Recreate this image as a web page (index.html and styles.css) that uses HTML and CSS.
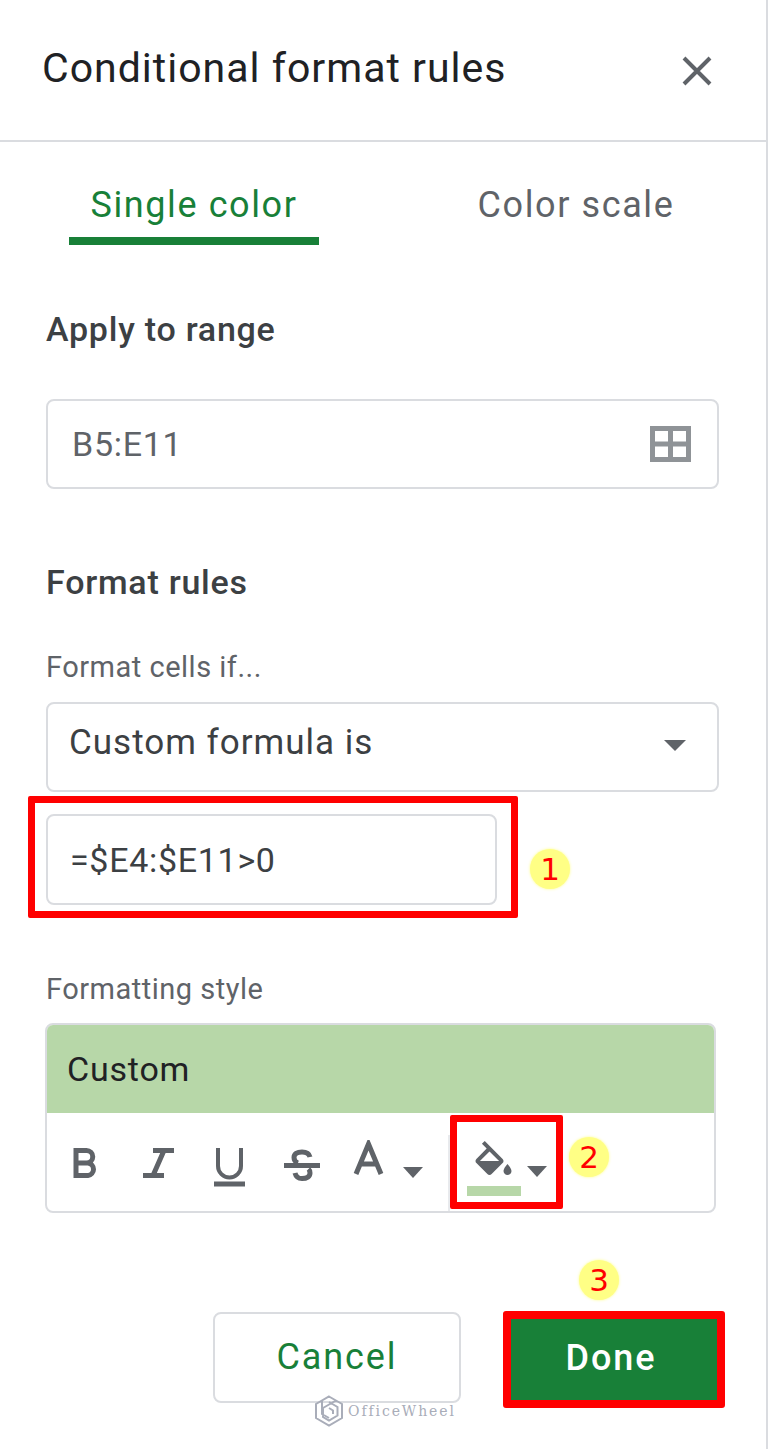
FILE: index.html
```html
<!DOCTYPE html>
<html>
	<head>
		<meta charset="UTF-8">
		<title>Conditional format rules</title>
		<link rel="stylesheet" href="styles.css">
	</head>
	<body>
		<section id="panel">
			<header class="head">
				<h1>Conditional format rules</h1>
				<svg class="close" width="30" height="30" viewBox="0 0 30 30"><path d="M2 2L28 28M28 2L2 28"/></svg>
			</header>

			<nav class="tabs">
				<div class="tab on">Single color</div>
				<div class="tab">Color scale</div>
			</nav>

			<section class="body">
				<h2 class="title range-title">Apply to range</h2>
				<div class="field range">
					<span>B5:E11</span>
					<svg width="41" height="36" viewBox="0 0 41 36"><path class="grid" d="M2.5 2.5H38.5V33.5H2.5ZM20.5 2.5V33.5M2.5 18H38.5"/></svg>
				</div>

				<h2 class="title rules-title">Format rules</h2>
				<div class="label if-label">Format cells if...</div>
				<div class="field select">
					<span>Custom formula is</span>
					<i class="caret"></i>
				</div>

				<div class="mark formula">
					<div class="field formula-input">=$E4:$E11&gt;0</div>
				</div>
				<b class="badge b1">1</b>

				<div class="label style-label">Formatting style</div>
				<div class="card">
					<div class="preview">Custom</div>
					<div class="tools">
						<div class="tool">
							<svg width="40" height="48" viewBox="0 0 40 48"><path class="ico" d="M10 8V38M8 10.5H20.5a6.2 6.2 0 0 1 0 12.5H10M20.5 23H22a6.3 6.3 0 0 1 0 12.5H8"/></svg>
						</div>
						<div class="tool">
							<svg width="40" height="48" viewBox="0 0 40 48"><path class="ico" d="M15 10.5H36M5 35.5H26M26 10.5L15 35.5"/></svg>
						</div>
						<div class="tool">
							<svg width="40" height="48" viewBox="0 0 40 48"><path class="ico thin" d="M8 8V26a11.5 11.5 0 0 0 23 0V8"/><path class="ico" d="M4 44H35"/></svg>
						</div>
						<div class="tool">
							<svg width="40" height="48" viewBox="0 0 40 48"><path class="ico" d="M28 17C27 13 24 12 20 12C15 12 12 14 12 17.500C12 20 13 22 16 23M13 33C14 37 17 38.500 20 38.500C25 38.500 28 36.500 28 33C28 31.500 27.500 30 26.500 29"/><path class="ico" d="M2 25.500H38"/></svg>
						</div>
						<div class="tool color">
							<svg width="32" height="48" viewBox="0 0 32 48"><path class="ico" d="M3 34L15.500 4L28 34M8 24H23"/></svg>
							<i class="caret small"></i>
						</div>
						<div class="mark fill">
							<div class="fill-row">
								<svg width="37" height="34" viewBox="3 0 18 17"><path class="solid" d="M16.560 8.940L7.620 0 6.210 1.410l2.380 2.380-5.150 5.150c-.59.59-.59 1.540 0 2.120l5.500 5.500c.29.29.68.44 1.060.44s.77-.15 1.060-.44l5.500-5.500c.59-.58.59-1.530 0-2.120zM5.210 10L10 5.210 14.790 10H5.210zM19 11.500s-2 2.170-2 3.500c0 1.100.9 2 2 2s2-.9 2-2c0-1.330-2-3.500-2-3.500z"/></svg>
								<i class="caret small"></i>
							</div>
							<div class="fill-bar"></div>
						</div>
					</div>
				</div>
				<b class="badge b2">2</b>

				<b class="badge b3">3</b>
				<footer class="foot">
					<div class="btn cancel">Cancel</div>
					<div class="btn done">Done</div>
				</footer>
			</section>

			<div class="wm">
				<svg width="30" height="32" viewBox="0 0 30 32"><path d="M15 1.500L28 9V23L15 30.500L2 23V9ZM15 7L23.500 12V20.500L15 25.500L9 22V13M15 13L19 15.500V19M8 5.500V19L15 23M22 5.500L9 13"/></svg>
				<span>OfficeWheel</span>
			</div>
		</section>
	</body>
</html>
```

FILE: styles.css
```css
*{
	box-sizing: border-box;
}
html,body{
	margin: 0;
	background: #fff;
}
#panel{
	position: relative;
	width: 768px;
	height: 1449px;
	border-right: 2px solid #dadce0;
	font-family: Roboto, "Liberation Sans", sans-serif;
	overflow: hidden;
}

.head{
	height: 142px;
	padding: 0 54px 5px 42px;
	border-bottom: 2px solid #dadce0;
	display: flex;
	justify-content: space-between;
	align-items: center;
}
.head h1{
	margin: 0;
	font-size: 41px;
	font-weight: 400;
	letter-spacing: 1px;
	color: #202124;
}
.close{
	margin-top: 6px;
}
.close path{
	fill: none;
	stroke: #5f6368;
	stroke-width: 4;
}

.tabs{
	display: flex;
	padding-left: 69px;
}
.tab{
	width: 250px;
	height: 103px;
	padding-top: 43px;
	line-height: 40px;
	font-size: 36px;
	letter-spacing: 1.6px;
	text-align: center;
	color: #5f6368;
	border-bottom: 8px solid transparent;
}
.tab:last-child{
	margin-left: 132px;
}
.tab.on{
	color: #188038;
	border-bottom-color: #188038;
}

.body{
	padding: 0 47px 0 46px;
}
.title{
	margin: 0;
	line-height: 40px;
	font-size: 34px;
	font-weight: 500;
	letter-spacing: .75px;
	color: #3c4043;
}
.range-title{
	margin-top: 64px;
	padding-bottom: 1px;
}
.rules-title{
	margin-top: 73px;
}
.label{
	line-height: 36px;
	font-size: 29px;
	letter-spacing: .5px;
	color: #5f6368;
}
.if-label{
	margin-top: 47px;
}
.style-label{
	margin-top: 53px;
}

.field{
	border: 2px solid #dadce0;
	border-radius: 8px;
	font-size: 34px;
	letter-spacing: .7px;
	color: #3c4043;
	display: flex;
	align-items: center;
	justify-content: space-between;
}
.range{
	height: 90px;
	margin-top: 49px;
	padding: 0 26px 0 24px;
	color: #5f6368;
}
.grid{
	fill: none;
	stroke: #8f9397;
	stroke-width: 5;
}
.select{
	height: 90px;
	margin-top: 17px;
	padding: 0 31px 10px 21px;
	font-size: 35px;
	letter-spacing: 1px;
}
.select .caret{
	margin-top: 6px;
}

.caret{
	display: block;
	width: 0;
	height: 0;
	border-left: 11px solid transparent;
	border-right: 11px solid transparent;
	border-top: 11px solid #5f6368;
}

/* 红框标注 */
.mark{
	border: 7px solid #f00;
	border-radius: 2px;
}
.formula{
	width: 490px;
	height: 122px;
	margin: 4px 0 0 -18px;
	padding: 11px;
}
.formula-input{
	width: 451px;
	height: 91px;
	padding-left: 22px;
	justify-content: flex-start;
}

.card{
	width: 671px;
	height: 190px;
	margin: 16px 0 0 -1px;
	border: 2px solid #dadce0;
	border-radius: 8px;
	overflow: hidden;
}
.preview{
	height: 88px;
	padding-left: 20px;
	line-height: 88px;
	font-size: 34px;
	letter-spacing: .8px;
	color: #202124;
	background: #b7d7a8;
}
.tools{
	display: flex;
	padding: 2px 0 0 3px;
}
.tool{
	flex: none;
	width: 72px;
	padding-top: 25px;
	display: flex;
	justify-content: center;
}
.tool.color{
	width: 112px;
	height: 76px;
	margin-top: 20px;
	padding: 5px 0 0 15px;
	justify-content: flex-start;
	border-right: 2px solid #e8eaed;
}
.caret.small{
	margin: 27px 0 0 18px;
	border-width: 11px 10px 0 10px;
	border-left-color: transparent;
	border-right-color: transparent;
}
.ico{
	fill: none;
	stroke: #5f6368;
	stroke-width: 5;
}
.ico.thin{
	stroke-width: 4;
}
.solid{
	fill: #5f6368;
}
.fill{
	flex: none;
	width: 113px;
	height: 94px;
	padding: 19px 0 0 10px;
}
.fill-row{
	display: flex;
	padding-left: 8px;
}
.fill-row .caret.small{
	margin: 25px 0 0 15px;
}
.fill-bar{
	width: 54px;
	height: 10px;
	margin-top: 9px;
	background: #b7d7a8;
}

.foot{
	display: flex;
	justify-content: flex-end;
	align-items: flex-start;
	gap: 42px;
	margin: 98px -6px 0 0;
}
.btn{
	display: flex;
	align-items: center;
	justify-content: center;
	font-size: 36px;
	font-weight: 500;
	padding-bottom: 2px;
	border-radius: 8px;
}
.cancel{
	width: 248px;
	height: 91px;
	margin-top: 1px;
	border: 2px solid #dadce0;
	font-weight: 400;
	letter-spacing: 1.900px;
	color: #188038;
}
.done{
	width: 222px;
	height: 97px;
	padding: 0 6px 4px 0;
	border: 8px solid #f00;
	border-radius: 3px;
	background: #188038;
	letter-spacing: 2px;
	color: #fff;
}

/* 序号 */
.badge{
	position: absolute;
	width: 40px;
	height: 40px;
	border-radius: 50%;
	background: #ffff85;
	box-shadow: 0 0 3px #ffff85;
	text-align: center;
	font: 400 31px/40px "DejaVu Sans", sans-serif;
	color: #f00;
}
.b1{
	left: 530px;
	top: 849px;
}
.b2{
	left: 569px;
	top: 1137px;
}
.b3{
	left: 579px;
	top: 1260px;
}

/* 水印 */
.wm{
	position: absolute;
	left: 314px;
	top: 1395px;
	display: flex;
	align-items: center;
	gap: 4px;
}
.wm path{
	fill: none;
	stroke: #a9adb9;
	stroke-width: 2;
}
.wm span{
	font: 400 14px "DejaVu Serif", serif;
	letter-spacing: 1.900px;
	color: #a9adb9;
}
```
